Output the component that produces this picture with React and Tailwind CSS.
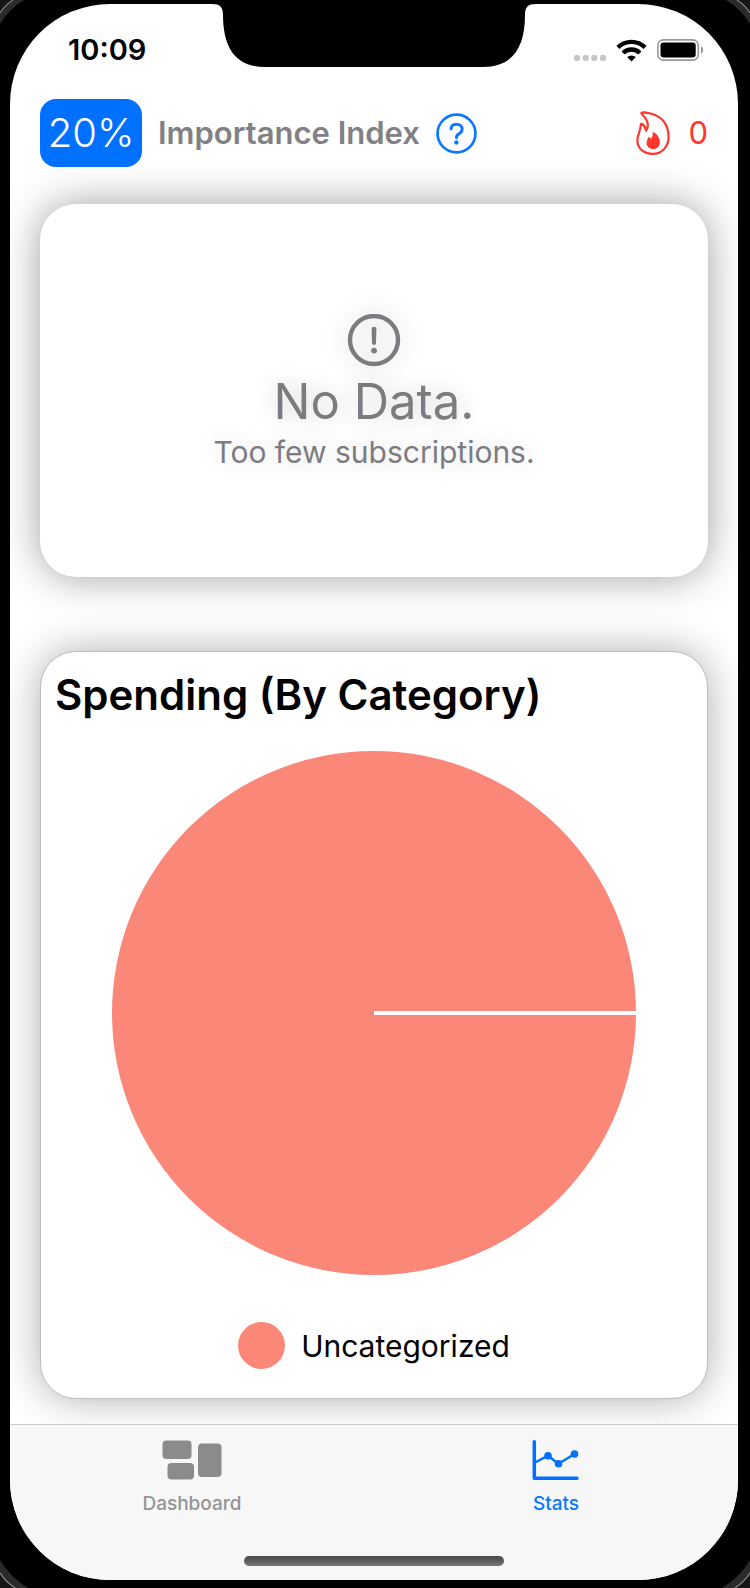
import React from "react";

const CORNERS = [
  { place: "top-0 left-0", size: "size-6" },
  { place: "top-0 right-0 -scale-x-100", size: "size-6" },
  { place: "bottom-0 left-0 -scale-y-100", size: "size-7" },
  { place: "bottom-0 right-0 -scale-100", size: "size-7" },
];

function BezelCorner({ place, size }) {
  return (
    <svg className={`absolute ${place} ${size}`} viewBox="0 0 24 24" aria-hidden="true">
      <path d="M0 24Q9 9 24 0H0Z" fill="#2a2a2b" />
      <path d="M0 13Q5 5 13 0H0Z" fill="#161617" />
      <path d="M0 13Q5 5 13 0" fill="none" stroke="#858585" strokeWidth="1.1" />
    </svg>
  );
}

function Notch() {
  return (
    <svg
      className="absolute top-0 left-1/2 h-16 w-[324px] -translate-x-1/2"
      viewBox="0 0 324 64"
      aria-hidden="true"
    >
      <path
        d="M0 0C8 0 11 3 11 11C11 43 23 63 53 63H271C301 63 313 43 313 11C313 3 316 0 324 0Z"
        fill="#000"
      />
    </svg>
  );
}

function StatusBar() {
  return (
    <div className="flex h-[92px] items-center justify-between pr-[34px] pl-[58px]">
      <time className="text-[29px] leading-8 font-semibold">10:09</time>
      <div className="flex items-center gap-[10px]">
        <svg className="mt-4 h-[6px] w-8" viewBox="0 0 32 6" fill="#c6c6c6" aria-hidden="true">
          <rect x="0" width="6" height="6" rx="2" />
          <rect x="8.7" width="6" height="6" rx="2" />
          <rect x="17.3" width="6" height="6" rx="2" />
          <rect x="26" width="6" height="6" rx="2" />
        </svg>
        <svg className="h-[23px] w-[31px]" viewBox="0 0 31 23" aria-hidden="true">
          <g fill="none" stroke="#000" strokeWidth="4.4">
            <path d="M1.9 8.4A19.5 19.5 0 0 1 29.1 8.4" />
            <path d="M7.1 14A11.9 11.9 0 0 1 23.9 14" />
          </g>
          <path d="M11.2 18.1A6.3 6.3 0 0 1 19.8 18.1L15.5 22.6Z" />
        </svg>
        <svg className="h-[22px] w-[47px]" viewBox="0 0 47 22" aria-hidden="true">
          <rect x="0.9" y="0.9" width="40.4" height="20.2" rx="5.5" fill="none" stroke="#9a9a9a" strokeWidth="1.6" />
          <rect x="3.5" y="3.5" width="35.2" height="15" rx="3" />
          <path d="M44 7.5C47 8.5 47 13.5 44 14.5Z" fill="#9a9a9a" />
        </svg>
      </div>
    </div>
  );
}

function Header() {
  return (
    <header className="flex items-center px-[30px] pt-[3px]">
      <span className="flex h-[68px] w-[102px] items-center justify-center rounded-2xl bg-[#0070ff] text-[40px] leading-none font-light text-white">
        20%
      </span>
      <h1 className="ml-4 text-[31px] leading-10 font-semibold whitespace-nowrap text-[#808085]">
        Importance Index
      </h1>
      <button type="button" aria-label="About the importance index" className="ml-4">
        <svg className="size-[41px]" viewBox="0 0 42 42" fill="none" stroke="#0a78ff" aria-hidden="true">
          <circle cx="21" cy="21" r="19.4" strokeWidth="2.7" />
          <path
            d="M15.4 16.4C15.5 13.3 17.7 11.6 21 11.6C24.3 11.6 26.8 13.6 26.8 16.6C26.8 18.9 25.6 20.1 23.6 21.3C21.7 22.4 20.9 23.4 20.9 25.3"
            strokeWidth="3"
            strokeLinecap="round"
          />
          <circle cx="20.9" cy="30.2" r="2.2" fill="#0a78ff" stroke="none" />
        </svg>
      </button>
      <div className="ml-auto flex items-center gap-[18px] text-[#ff362e]">
        <svg className="h-11 w-[34px]" viewBox="0 0 34 44" aria-hidden="true">
          <path
            d="M5.4 1.9C6.2 0.9 19.5 1.4 27 9.5C30.8 13.8 32.6 19.5 32.6 26C32.6 36 25.6 42.8 16.8 42.8C7.8 42.8 1.4 37.5 1.4 29.5C1.4 22.5 5 20 4.8 13.3C4.8 12.6 5.4 12.6 6 13C8.2 14.3 9.6 16.6 10.1 19.6C13.4 14.5 11.4 8.5 6.2 3.5C5.6 2.9 5.2 2.4 5.4 1.9Z"
            fill="none"
            stroke="currentColor"
            strokeWidth="2.2"
            strokeLinejoin="round"
          />
          <path
            d="M16.6 20.8C20.5 22.3 23.9 26.6 23.9 31.2C23.9 35.2 21 38 17.3 38C13.4 38 10.6 35.6 10.6 32C10.6 29.4 12 28.6 12 26C13.4 26.2 14.2 26.8 14.8 27.8C16.4 26.2 17.2 23.6 16.6 20.8Z"
            fill="currentColor"
          />
        </svg>
        <span className="text-[31px] leading-10 font-normal">0</span>
      </div>
    </header>
  );
}

function ImportanceCard() {
  return (
    <section className="mx-[30px] mt-[37px] flex h-[373px] flex-col items-center justify-center rounded-[36px] bg-white pt-1 text-[#7c7c80] shadow-[0_0_40px_rgba(0,0,0,0.38)]">
      <svg
        className="size-[54px] drop-shadow-[0_0_12px_rgba(0,0,0,0.2)]"
        viewBox="0 0 54 54"
        aria-hidden="true"
      >
        <circle cx="27" cy="26" r="24" fill="none" stroke="currentColor" strokeWidth="4.4" />
        <path d="M24.6 14.7C24.6 12 29.4 12 29.4 14.7L29 29.3C28.9 31.4 25.1 31.4 25 29.3Z" fill="currentColor" />
        <circle cx="27" cy="36.6" r="2.9" fill="currentColor" />
      </svg>
      <h2 className="mt-1 text-[49px] leading-[60px] font-normal [text-shadow:0_0_24px_rgba(0,0,0,0.2)]">
        No Data.
      </h2>
      <p className="text-[30px] leading-10 [text-shadow:0_0_24px_rgba(0,0,0,0.18)]">
        Too few subscriptions.
      </p>
    </section>
  );
}

function SpendingCard() {
  return (
    <section className="mx-[30px] mt-[74px] rounded-[36px] border border-[#bdbdbd] bg-white pb-[29px] shadow-[0_0_40px_rgba(0,0,0,0.32)]">
      <h2 className="px-[14px] pt-[15px] text-[42px] leading-[56px] font-semibold whitespace-nowrap">
        Spending (By Category)
      </h2>
      <svg
        className="mx-auto mt-7 block w-[524px] max-w-full"
        viewBox="0 0 524 524"
        role="img"
        aria-label="All spending is uncategorized"
      >
        <circle cx="262" cy="262" r="262" fill="#fb8779" />
        <path d="M262 262H524" stroke="#fff" strokeWidth="4" />
      </svg>
      <div className="mt-[47px] flex items-center justify-center gap-4">
        <span className="size-[47px] rounded-full bg-[#fb8779]" />
        <span className="text-[30px] leading-10">Uncategorized</span>
      </div>
    </section>
  );
}

function TabBar() {
  return (
    <div className="mt-[25px] border-t border-[#cbcbcb] bg-[#f7f7f7] pb-[14px]">
      <nav className="grid grid-cols-2 pt-[15px] text-[19px] leading-6 font-medium">
        <a href="#dashboard" className="flex flex-col items-center gap-3 text-[#949494]">
          <svg className="h-10 w-[60px]" viewBox="0 0 60 40" fill="#8b8b8b" aria-hidden="true">
            <rect x="0.5" y="0.5" width="29" height="18.5" rx="4" />
            <rect x="5.5" y="23" width="26.5" height="16.5" rx="4" />
            <rect x="36" y="3.5" width="23.5" height="33.5" rx="4" />
          </svg>
          Dashboard
        </a>
        <a href="#stats" aria-current="page" className="flex flex-col items-center gap-3 text-[#0a78ff]">
          <svg
            className="h-10 w-12"
            viewBox="0 0 48 40"
            fill="none"
            stroke="#0070ff"
            strokeLinecap="round"
            strokeLinejoin="round"
            aria-hidden="true"
          >
            <path d="M2.3 1.8V38.2H45" strokeWidth="3.5" />
            <path d="M3 22.5L16 15.7L26.5 23.7L42.5 14" strokeWidth="2.5" />
            <g fill="#0070ff" stroke="none">
              <circle cx="16" cy="15.7" r="3.8" />
              <circle cx="26.5" cy="23.7" r="3.8" />
              <circle cx="42.5" cy="14" r="3.8" />
            </g>
          </svg>
          Stats
        </a>
      </nav>
      <div className="mx-auto mt-10 h-[10px] w-[260px] rounded-full bg-linear-to-b from-[#484848] to-[#777777]" />
    </div>
  );
}

export default function App() {
  return (
    <div className="relative bg-black pt-1 pr-3 pb-2 pl-[10px] font-['Inter','Liberation_Sans',sans-serif] text-black">
      {CORNERS.map((corner) => (
        <BezelCorner key={corner.place} {...corner} />
      ))}
      <main className="relative overflow-hidden rounded-[100px] bg-white">
        <Notch />
        <StatusBar />
        <Header />
        <ImportanceCard />
        <SpendingCard />
        <TabBar />
      </main>
    </div>
  );
}
